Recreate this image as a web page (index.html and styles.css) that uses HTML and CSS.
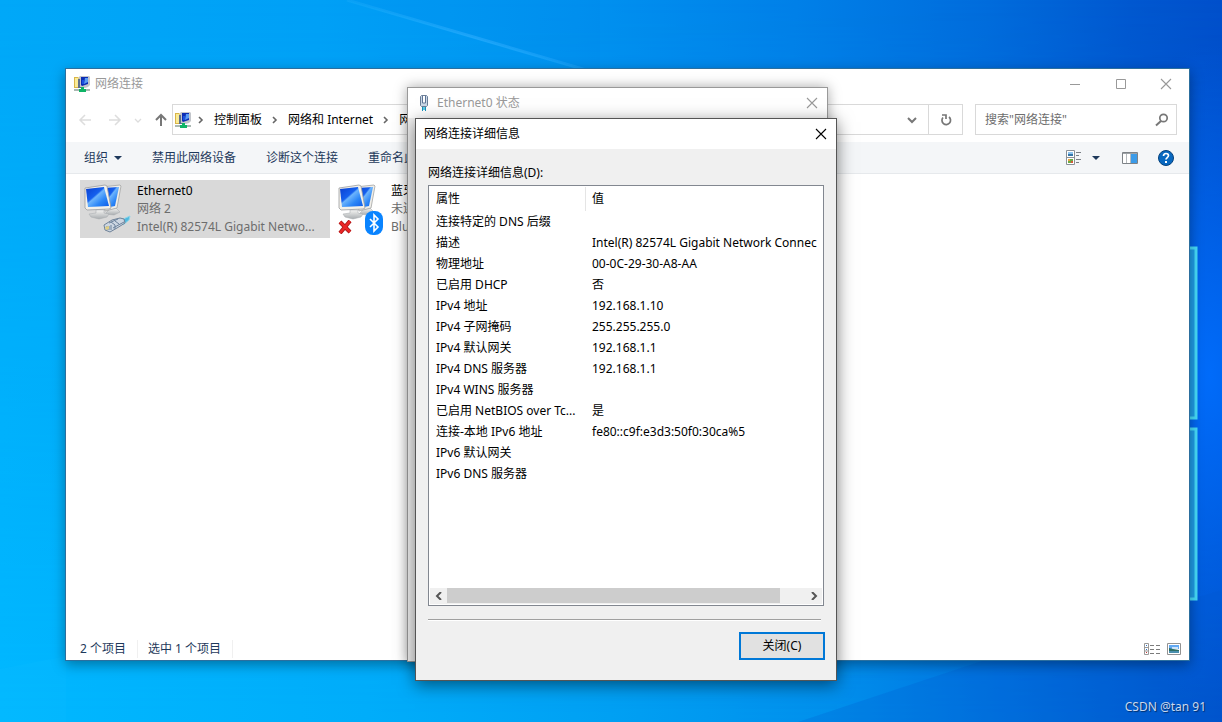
FILE: index.html
```html
<!DOCTYPE html>
<html lang="zh-CN">
<head>
<meta charset="utf-8">
<title>网络连接</title>
<link rel="stylesheet" href="styles.css">
</head>
<body>
<svg class="defs" aria-hidden="true">
  <defs>
    <linearGradient id="screen" x1="0" y1="0" x2="1" y2="1">
      <stop offset="0" stop-color="#0a3fd0"/><stop offset=".4" stop-color="#1560ee"/>
      <stop offset=".46" stop-color="#6cb4fc"/><stop offset=".7" stop-color="#2b86f7"/><stop offset="1" stop-color="#0d5be8"/>
    </linearGradient>
    <linearGradient id="metal" x1="0" y1="0" x2="0" y2="1">
      <stop offset="0" stop-color="#f4f4f2"/><stop offset="1" stop-color="#a9adb0"/>
    </linearGradient>
    <linearGradient id="beam" x1="0" y1="0" x2="1" y2="0">
      <stop offset="0" stop-color="#30b8ff" stop-opacity=".2"/><stop offset=".5" stop-color="#30b0ff" stop-opacity=".6"/>
      <stop offset="1" stop-color="#30b0ff" stop-opacity=".3"/>
    </linearGradient>
  </defs>
  <symbol id="net" viewBox="0 0 16 16">
    <path d="M0 1h4l1 1h2v10H0z" fill="#d9b548"/>
    <path d="M1 2h3l1 1h1v8H1z" fill="#faeb96"/>
    <path d="M6 0h9l1 1v8l-2 2-3 1-6-1V1z" fill="#c3c6cb"/>
    <path d="M4 3h2v8h4v1H4z" fill="#5f6f8c"/>
    <path d="M7 1h7v7l-6 2-1-1z" fill="#0c2db4"/>
    <path d="M11 2h3v4l-4 2z" fill="#5a9cf4"/>
    <path d="M8 4h2v4H8z" fill="#1a52e0"/>
    <path d="M7 11h3v2h2v3H5v-3h2z" fill="#0fb466"/>
    <path d="M0 13h5v2H0zM12 13h4v2h-4z" fill="#aab8b2"/>
  </symbol>
  <symbol id="pcs" viewBox="0 0 40 36">
    <path d="M26 25l6-1 4 4-6 3-9-1z" fill="url(#metal)" stroke="#a5a9ad" stroke-width=".5"/>
    <path d="M17 3l19-2 1 1-4 22-12 3z" fill="#f0eee8" stroke="#a3a5a5" stroke-width=".8"/>
    <path d="M19 4l16-1-4 19-10 2z" fill="url(#screen)"/>
    <path d="M12 26l8 0v3l5 1-2 3-8 2-8-2-2-3 7-1z" fill="url(#metal)" stroke="#a5a9ad" stroke-width=".5"/>
    <path d="M1 4l20-3 2 1 4 22-2 1-22 1-2-2z" fill="#f3f1ea" stroke="#999c9f" stroke-width=".8"/>
    <path d="M2 5l18-2 5 19-21 1z" fill="url(#screen)"/>
  </symbol>
  <symbol id="chev-r" viewBox="0 0 8 8"><path d="M2 1l3 3-3 3" fill="none" stroke="currentColor" stroke-width="1.6"/></symbol>
  <symbol id="x" viewBox="0 0 12 12"><path d="M1 1l10 10M11 1L1 11" fill="none" stroke="currentColor" stroke-width="1.1"/></symbol>
</svg>

<main class="desktop">
  <svg class="wallpaper" viewBox="0 0 1222 722" preserveAspectRatio="none" aria-hidden="true">
    <path d="M347 0L600 74" stroke="url(#beam)" stroke-width="3"/>
    <path d="M347 0L600 74V0z" fill="#006ae0" opacity=".06"/>
    <path d="M798 722L1000 655L1222 590V722z" fill="#0058cc" opacity=".22"/>
    <path d="M0 669L66 656V722H0z" fill="#10c0ff" opacity=".2"/>
    <g fill="#1f9be6" stroke="#46dcfa" stroke-width="3">
      <path d="M1150 248H1196V418H1150z"/>
      <path d="M1150 429H1196V599H1150z"/>
    </g>
  </svg>

  <section class="window explorer" aria-label="网络连接">
    <header class="titlebar">
      <svg class="i16"><use href="#net"/></svg>
      <h1 class="title muted">网络连接</h1>
      <button class="caption muted" aria-label="最小化"><svg class="i12" viewBox="0 0 12 12"><path d="M1 6.500h10" stroke="currentColor"/></svg></button>
      <button class="caption muted" aria-label="最大化"><svg class="i12" viewBox="0 0 12 12"><path d="M1.500 1.500h9v9h-9z" fill="none" stroke="currentColor"/></svg></button>
      <button class="caption muted" aria-label="关闭"><svg class="i12"><use href="#x"/></svg></button>
    </header>

    <nav class="navbar">
      <div class="history">
        <button class="nav off" aria-label="后退"><svg class="i14" viewBox="0 0 14 14"><path d="M13 7H2M7 2L2 7l5 5" fill="none" stroke="currentColor" stroke-width="1.500"/></svg></button>
        <button class="nav off" aria-label="前进"><svg class="i14" viewBox="0 0 14 14"><path d="M1 7h11M7 2l5 5-5 5" fill="none" stroke="currentColor" stroke-width="1.500"/></svg></button>
        <button class="nav off recent" aria-label="最近"><svg class="i8" viewBox="0 0 8 8"><path d="M1 3l3 3 3-3" fill="none" stroke="currentColor" stroke-width="1.300"/></svg></button>
        <button class="nav" aria-label="上移"><svg class="i14" viewBox="0 0 14 14"><path d="M7 13V2M2 7l5-5 5 5" fill="none" stroke="currentColor" stroke-width="2"/></svg></button>
      </div>
      <div class="address">
        <svg class="i16"><use href="#net"/></svg>
        <div class="crumbs">
          <svg class="i8"><use href="#chev-r"/></svg><a href="#">控制面板</a>
          <svg class="i8"><use href="#chev-r"/></svg><a href="#">网络和 Internet</a>
          <svg class="i8"><use href="#chev-r"/></svg><a href="#">网</a>
        </div>
        <button class="drop" aria-label="历史记录"><svg class="i12" viewBox="0 0 12 12"><path d="M2 4l4 4 4-4" fill="none" stroke="currentColor" stroke-width="2"/></svg></button>
        <button class="refresh" aria-label="刷新"><svg class="i14" viewBox="0 0 14 14"><path d="M10 4A4.300 4.300 0 1 1 4 4.500" fill="none" stroke="currentColor" stroke-width="1.700"/><path d="M3 2h4v4" fill="none" stroke="currentColor" stroke-width="1.700"/></svg></button>
      </div>
      <div class="search">
        <input class="query" type="text" placeholder="搜索&quot;网络连接&quot;" aria-label="搜索">
        <svg class="i14" viewBox="0 0 14 14"><circle cx="8.500" cy="5" r="3.700" fill="none" stroke="currentColor" stroke-width="1.700"/><path d="M6 8l-5 4.500" stroke="currentColor" stroke-width="2"/></svg>
      </div>
    </nav>

    <div class="toolbar">
      <button class="cmd">组织<svg class="i8" viewBox="0 0 8 8"><path d="M0 2h8L4 6z" fill="currentColor"/></svg></button>
      <button class="cmd">禁用此网络设备</button>
      <button class="cmd">诊断这个连接</button>
      <button class="cmd">重命名此</button>
      <div class="views">
        <button class="cmd view" aria-label="更改视图">
          <svg class="i16" viewBox="0 0 16 16"><path d="M.500.500h8v14h-8zM0 7.500h9" fill="#fff" stroke="#8a9096"/><path d="M2 2h5v2H2z" fill="#8dc4f0"/><path d="M2 4h5v2H2z" fill="#3577a8"/><path d="M2 9h5v4H2z" fill="#6aab45"/><path d="M2 9h2v2H2z" fill="#e8a33c"/><path d="M5 11h2v2H5z" fill="#d55a3a"/><path d="M10 2.500h5M10 5.500h3M10 9.500h5M10 12.500h3" stroke="#7b8086"/></svg>
          <svg class="i8" viewBox="0 0 8 8"><path d="M0 2h8L4 6z" fill="currentColor"/></svg>
        </button>
        <button class="cmd" aria-label="预览窗格"><svg class="i16" viewBox="0 0 16 16"><path d="M.500 2.500h15v11H.500z" fill="#fff" stroke="#7d8287"/><path d="M1 3h14v1H1z" fill="#9da2a6"/><path d="M9 4h6v9H9z" fill="#3c9be8"/><path d="M4.500 4v9M8.500 4v9" stroke="#b5babd"/></svg></button>
        <button class="cmd" aria-label="帮助"><svg class="i16" viewBox="0 0 16 16"><circle cx="8" cy="8" r="7.500" fill="#0868c0" stroke="#06427c"/><path d="M5.500 6c0-3.300 5-3.200 5-.400 0 2-2.500 2-2.500 4" fill="none" stroke="#fff" stroke-width="1.700"/><path d="M7 11h2v2H7z" fill="#fff"/></svg></button>
      </div>
    </div>

    <div class="items">
      <button class="item selected">
        <span class="art"><svg class="pcs"><use href="#pcs"/></svg>
          <svg class="plug" viewBox="0 0 28 18"><path d="M18 5l9-4-1 4-6 5z" fill="#4fb9df" stroke="#8fd6ea"/><path d="M1 10l8-5 8-2 4 1 1 4-8 5-7 4-5-2z" fill="#ccd6e2" stroke="#6f8298"/><path d="M6 8l9-4M10 13l11-6M8 7l4 3v4M12 6l4 3M4 11v4M6 11v4M8 10v5" stroke="#6c829c" fill="none"/><path d="M2 12l4-1v3l-3 1z" fill="#e0cf83"/></svg></span>
        <span class="info"><span class="name">Ethernet0</span><span class="sub">网络 2</span><span class="sub">Intel(R) 82574L Gigabit Netwo...</span></span>
      </button>
      <button class="item">
        <span class="art"><svg class="pcs"><use href="#pcs"/></svg>
          <svg class="cross" viewBox="0 0 14 14"><path d="M2 2l10 10M12 1L2 13" stroke="#a51414" stroke-width="4"/><path d="M2 2l10 10M12 1L2 13" stroke="#ea2626" stroke-width="2.500"/></svg>
          <svg class="bt" viewBox="0 0 18 24"><rect width="18" height="24" rx="8" fill="#0a84ff"/><path d="M5 8l8 8-4 4V4l4 4-8 8" fill="none" stroke="#fff" stroke-width="1.600"/></svg></span>
        <span class="info"><span class="name">蓝牙</span><span class="sub">未连</span><span class="sub">Blu</span></span>
      </button>
    </div>

    <footer class="statusbar">
      <span class="count">2 个项目</span><span class="count">选中 1 个项目</span>
      <div class="modes">
        <button class="mode" aria-label="详细信息"><svg class="i16" viewBox="0 0 16 16"><path d="M.500 2.500h4v11h-4zM0 6.500h4M0 10h4" fill="#fff" stroke="#999"/><path d="M2 4h1v1H2zM2 8h1v1H2z" fill="#2874c8"/><path d="M2 11h1v1H2z" fill="#c33"/><path d="M6 4.500h4M6 8.500h4M6 12.500h4M12 4.500h4M12 8.500h4M12 12.500h4" stroke="#7b7b7b"/></svg></button>
        <button class="mode" aria-label="大图标"><svg class="i14" viewBox="0 0 14 12"><path d="M.500.500h13v11H.500z" fill="#fff" stroke="#929292"/><path d="M2 2h10v4H2z" fill="#62a9f3"/><path d="M5 4h6v2H5z" fill="#cfe4f8"/><path d="M2 5l4 1 6 1v1H2z" fill="#2c6e64"/><path d="M2 8h10v2H2z" fill="#4a8fae"/></svg></button>
      </div>
    </footer>
  </section>

  <section class="window status" role="dialog" aria-label="Ethernet0 状态">
    <header class="titlebar">
      <svg class="i16" viewBox="0 0 16 16"><path d="M4.500 1.500l1-1h5l1 1v9l-1 1h-5l-1-1z" fill="#cbd8e6" stroke="#6c7f98"/><path d="M6.500 1v7h3V1" fill="#fff" stroke="#5f7595"/><path d="M6 12h1v4H6zM9 12h1v4H9z" fill="#1693bd"/><path d="M7 12h2v3H7z" fill="#62c8e2"/></svg>
      <h2 class="title muted">Ethernet0 状态</h2>
      <button class="caption muted" aria-label="关闭"><svg class="i12"><use href="#x"/></svg></button>
    </header>
  </section>

  <section class="window details" role="dialog" aria-labelledby="dlg">
    <header class="titlebar">
      <h2 class="title" id="dlg">网络连接详细信息</h2>
      <button class="caption" aria-label="关闭"><svg class="i12"><use href="#x"/></svg></button>
    </header>
    <div class="body">
      <p class="label" id="lbl">网络连接详细信息(D):</p>
      <div class="listbox">
        <table class="props" aria-labelledby="lbl">
          <thead><tr><th class="key">属性</th><th>值</th></tr></thead>
          <tbody>
            <tr><td>连接特定的 DNS 后缀</td><td></td></tr>
            <tr><td>描述</td><td class="long">Intel(R) 82574L Gigabit Network Connec</td></tr>
            <tr><td>物理地址</td><td>00-0C-29-30-A8-AA</td></tr>
            <tr><td>已启用 DHCP</td><td>否</td></tr>
            <tr><td>IPv4 地址</td><td>192.168.1.10</td></tr>
            <tr><td>IPv4 子网掩码</td><td>255.255.255.0</td></tr>
            <tr><td>IPv4 默认网关</td><td>192.168.1.1</td></tr>
            <tr><td>IPv4 DNS 服务器</td><td>192.168.1.1</td></tr>
            <tr><td>IPv4 WINS 服务器</td><td></td></tr>
            <tr><td>已启用 NetBIOS over Tc...</td><td>是</td></tr>
            <tr><td>连接-本地 IPv6 地址</td><td>fe80::c9f:e3d3:50f0:30ca%5</td></tr>
            <tr><td>IPv6 默认网关</td><td></td></tr>
            <tr><td>IPv6 DNS 服务器</td><td></td></tr>
          </tbody>
        </table>
        <div class="scrollbar">
          <button class="arrow" aria-label="向左滚动"><svg class="i8" viewBox="0 0 8 8"><path d="M6 0L2 4l4 4" fill="none" stroke="currentColor" stroke-width="2"/></svg></button>
          <div class="track"><div class="thumb"></div></div>
          <button class="arrow" aria-label="向右滚动"><svg class="i8" viewBox="0 0 8 8"><path d="M2 0l4 4-4 4" fill="none" stroke="currentColor" stroke-width="2"/></svg></button>
        </div>
      </div>
      <hr class="rule">
      <button class="ok">关闭(C)</button>
    </div>
  </section>

  <p class="watermark">CSDN @tan 91</p>
</main>
</body>
</html>
```
FILE: styles.css
```css
* { box-sizing: border-box; }

body {
  margin: 0;
  font: 12px/18px "Noto Sans", "Noto Sans CJK SC", sans-serif;
  color: #000;
}

button, input {
  margin: 0;
  padding: 0;
  border: 0;
  background: none;
  font: inherit;
  color: inherit;
}

h1, h2, p { margin: 0; font-size: 12px; font-weight: 400; }
a { color: inherit; text-decoration: none; }
svg { display: block; flex: none; }
.defs { position: absolute; width: 0; height: 0; }
.i8 { width: 8px; height: 8px; }
.i12 { width: 12px; height: 12px; }
.i14 { width: 14px; height: 14px; }
.i16 { width: 16px; height: 16px; }

.desktop {
  position: relative;
  min-height: 100vh;
  overflow: hidden;
  background: linear-gradient(95deg, #00a8f8 0%, #00a0f6 25%, #0092f0 45%, #0080e8 62%, #006cdc 77%, #0058d0 88%, #004ac8 100%);
}
.desktop::before {
  content: "";
  position: absolute;
  inset: 0;
  background: linear-gradient(90deg, #00b8ff 0%, #00adfa 30%, #00a0f3 50%, #0090ec 68%, #0074e0 82%, #0054cc 100%);
  mask-image: linear-gradient(to bottom, transparent, #000);
}
.desktop::after {
  content: "";
  position: absolute;
  inset: 0;
  background: radial-gradient(ellipse 10% 46% at 99% 52%, rgba(0, 110, 255, .9), rgba(0, 110, 255, 0));
}
.wallpaper { position: absolute; z-index: 1; inset: 0; width: 100%; height: 100%; }

.window {
  position: absolute;
  z-index: 2;
  display: flex;
  flex-direction: column;
  background: #fff;
}
.titlebar { display: flex; align-items: center; height: 30px; flex: none; background: #fff; }
.title { flex: 1; }
.muted { color: #999; }
.caption { display: grid; place-items: center; height: 28px; }

.explorer {
  top: 68px;
  right: 32px;
  bottom: 61px;
  left: 65px;
  border: 1px solid #2c6f9e;
  box-shadow: 0 4px 12px rgba(0, 0, 0, .35);
}
.explorer .titlebar { padding: 0 0 1px 8px; gap: 5px; }
.explorer .caption { width: 41px; }
.explorer .caption:last-child { padding-right: 5px; }
.explorer .caption:not(:last-child) { padding-right: 4px; }

.navbar { display: flex; height: 43px; padding: 5px 12px 7px 0; }
.history { display: flex; align-items: center; width: 106px; padding-left: 12px; gap: 16px; }
.nav { color: #777; }
.off { color: #ddd; }
.recent { margin: 0 -4px; }
.address { display: flex; flex: 1; align-items: center; min-width: 0; border: 1px solid #d9d9d9; padding-left: 2px; }
.crumbs { display: flex; flex: 1; align-items: center; gap: 9px; min-width: 0; padding-left: 6px; overflow: hidden; white-space: nowrap; }
.crumbs svg { color: #666; }
.drop { display: grid; place-items: center; width: 32px; height: 28px; color: #777; }
.refresh { display: grid; place-items: center; width: 34px; height: 29px; border-left: 1px solid #d9d9d9; color: #777; }
.search { display: flex; align-items: center; width: 202px; margin-left: 12px; padding: 0 7px 0 9px; border: 1px solid #d9d9d9; color: #777; }
.query { flex: 1; min-width: 0; outline: 0; }
.query::placeholder { color: #6d6d6d; opacity: 1; }

.toolbar { display: flex; align-items: center; flex: none; height: 32px; padding: 0 15px 0 18px; gap: 30px; background: #f4f6f8; border-bottom: 1px solid #e6e9ec; color: #1e395b; }
.cmd { display: flex; align-items: center; gap: 6px; white-space: nowrap; }
.views { display: flex; align-items: center; gap: 20px; margin-left: auto; }
.view { gap: 10px; padding-right: 2px; }

.items { display: flex; flex: 1; align-items: flex-start; gap: 4px; padding: 6px 14px; min-height: 0; }
.item { display: flex; width: 250px; height: 58px; padding: 2px 4px; text-align: left; }
.selected { background: #d9d9d9; }
.art { position: relative; flex: none; width: 53px; height: 54px; }
.pcs { width: 40px; height: 36px; margin-top: 2px; }
.plug { position: absolute; left: 19px; bottom: 3px; width: 28px; height: 18px; }
.cross { position: absolute; left: 0; bottom: 2px; width: 14px; height: 14px; }
.bt { position: absolute; left: 27px; bottom: 1px; width: 18px; height: 24px; }
.info { flex: 1; min-width: 0; }
.name, .sub { display: block; white-space: nowrap; }
.sub { color: #6d6d6d; }

.statusbar { display: flex; align-items: center; height: 23px; padding: 0 8px 0 14px; color: #1e395b; }
.count { padding-right: 11px; margin-right: 10px; border-right: 1px solid #f0f0f0; }
.modes { display: flex; align-items: center; gap: 7px; margin-left: auto; }

.status {
  top: 87px;
  bottom: 60px;
  left: 407px;
  width: 421px;
  border: 1px solid #999;
  background: #f0f0f0;
  box-shadow: 0 0 12px rgba(0, 0, 0, .35);
}
.status .titlebar { padding: 0 9px 1px 8px; gap: 5px; }

.details {
  top: 118px;
  bottom: 41px;
  left: 415px;
  width: 422px;
  border: 1px solid #555;
  background: #f0f0f0;
  box-shadow: 0 4px 16px rgba(0, 0, 0, .5);
}
.details .titlebar { padding: 0 9px 1px 8px; }
.body { display: flex; flex: 1; flex-direction: column; min-height: 0; padding: 15px 11px 20px 12px; }
.label { height: 21px; }
.listbox { display: flex; flex: 1; flex-direction: column; min-height: 0; padding: 1px; margin-right: 1px; border: 1px solid #828790; background: #fff; overflow: hidden; }
.props { width: 100%; border-collapse: separate; border-spacing: 0; table-layout: fixed; }
.props th, .props td { height: 21px; padding: 0 2px 0 6px; font-weight: 400; text-align: left; white-space: nowrap; }
.props th { height: 24px; }
.props .key { width: 156px; border-right: 1px solid #e5e5e5; }
.scrollbar { display: flex; height: 16px; margin-top: auto; background: #f0f0f0; }
.arrow { display: grid; place-items: center; width: 17px; color: #555; }
.track { flex: 1; }
.thumb { width: 93%; height: 15px; background: #cdcdcd; }
.rule { width: calc(100% - 4px); margin: 13px 0 11px; border: 0; border-top: 1px solid #a0a0a0; border-bottom: 1px solid #fff; }
.ok { align-self: flex-end; width: 86px; height: 28px; border: 2px solid #0078d7; background: #e1e1e1; }

.watermark { position: absolute; z-index: 1; right: 16px; bottom: 6px; color: #c8d8ee; text-shadow: 1px 1px 1px rgba(0, 0, 0, .5); }
```
